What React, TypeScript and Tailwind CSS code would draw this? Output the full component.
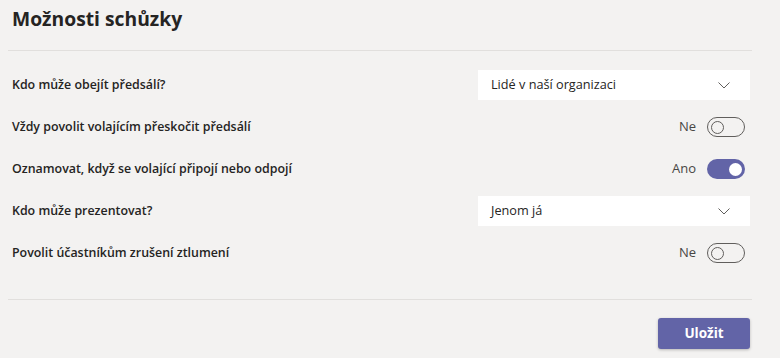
import React, { useState } from 'react';

const font = { fontFamily: '"Open Sans", "Noto Sans", sans-serif' };

const Toggle: React.FC<{ on: boolean; onChange: () => void }> = ({ on, onChange }) => (
    <button
        onClick={onChange}
        className={`w-[38px] h-[20px] rounded-full flex items-center px-[3px] ${on ? 'bg-[#6264a7] justify-end' : 'border border-[#605e5c] justify-start'}`}
    >
        <span className={`w-[13px] h-[13px] rounded-full ${on ? 'bg-white' : 'border border-[#605e5c]'}`} />
    </button>
);

const Dropdown: React.FC<{ value: string }> = ({ value }) => (
    <div className="w-[272px] h-[30px] bg-white flex items-center justify-between pl-[13px] pr-[20px] text-[12.7px] text-[#252423]">
        <span>{value}</span>
        <svg width="12" height="7" viewBox="0 0 12 7" fill="none">
            <path d="M0.5 0.5 L6 6 L11.5 0.5" stroke="#605e5c" strokeWidth="1" />
        </svg>
    </div>
);

const Switch: React.FC<{ on: boolean; onChange: () => void }> = ({ on, onChange }) => (
    <div className="flex items-center gap-[11px] mr-[5px]">
        <span className="text-[13px] text-[#484644]">{on ? 'Ano' : 'Ne'}</span>
        <Toggle on={on} onChange={onChange} />
    </div>
);

export default function App() {
    const [skipLobby, setSkipLobby] = useState(false);
    const [announce, setAnnounce] = useState(true);
    const [unmute, setUnmute] = useState(false);

    const rows: { label: string; control: React.ReactNode }[] = [
        { label: 'Kdo může obejít předsálí?', control: <Dropdown value="Lidé v naší organizaci" /> },
        { label: 'Vždy povolit volajícím přeskočit předsálí', control: <Switch on={skipLobby} onChange={() => setSkipLobby(!skipLobby)} /> },
        { label: 'Oznamovat, když se volající připojí nebo odpojí', control: <Switch on={announce} onChange={() => setAnnounce(!announce)} /> },
        { label: 'Kdo může prezentovat?', control: <Dropdown value="Jenom já" /> },
        { label: 'Povolit účastníkům zrušení ztlumení', control: <Switch on={unmute} onChange={() => setUnmute(!unmute)} /> },
    ];

    return (
        <div className="w-[780px] h-[358px] bg-[#f3f2f1] pl-[12px] pr-[30px]" style={font}>
            <div className="h-[50px] pt-[5px]">
                <h1 className="text-[19.3px] leading-[28px] font-bold text-[#252423]">Možnosti schůzky</h1>
            </div>
            <div className="h-px bg-[#e1dfdd] -ml-[4px] mr-[-2px]" />
            <div className="mt-[13px]">
                {rows.map(row => (
                    <div key={row.label} className="h-[42px] flex items-center justify-between">
                        <span className="text-[12.4px] font-semibold text-[#252423]">{row.label}</span>
                        {row.control}
                    </div>
                ))}
            </div>
            <div className="h-px bg-[#e1dfdd] mt-[25px] -ml-[4px] mr-[-2px]" />
            <div className="flex justify-end mt-[18px]">
                <button className="w-[92px] h-[31px] rounded-[3px] bg-[#6264a7] text-white text-[13.5px] font-bold shadow-[0_1px_3px_rgba(0,0,0,0.25)]">
                    Uložit
                </button>
            </div>
        </div>
    );
}
